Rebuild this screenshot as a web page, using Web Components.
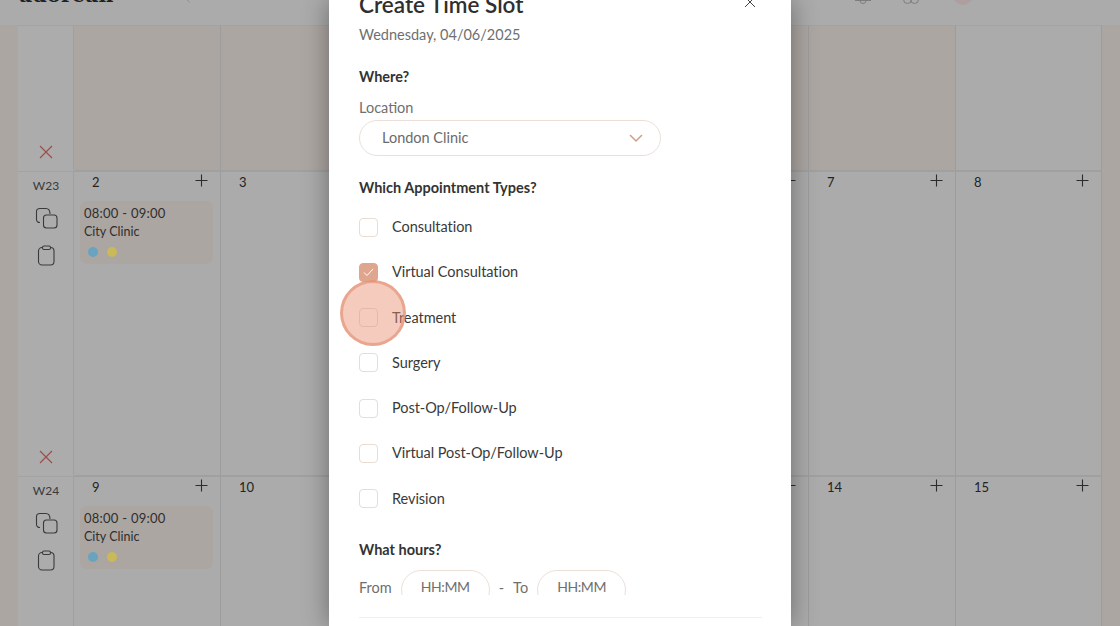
<!DOCTYPE html>
<html>
<head>
<meta charset="utf-8">
<style>
html, body { margin: 0; padding: 0; height: 100%; overflow: hidden; background: #ababab; font-family: Lato, "Liberation Sans", sans-serif; }
</style>
</head>
<body>
<template id="dayTemplate">
    <style>
        :host { display: block; position: relative; box-sizing: border-box; border-right: 1px solid #9c9c9c; border-top: 2px solid #a0a0a0; padding: 1px 6px 0 6px; color: #232323; }
        :host([beige]) { background: #aca6a2; }
        :host([top]) { border-top: 1px solid #a3a3a3; }
        .head { display: flex; justify-content: space-between; align-items: center; height: 17px; padding: 0 7px 0 12px; font-size: 13px; }
        svg { display: block; width: 13px; height: 13px; margin-right: -1px; margin-top: -2px; }
        .cards { display: block; margin-top: 11px; }
    </style>
    <div class="head"><span class="num"></span><svg viewBox="0 0 13 13" class="plus"><path d="M6.5 .5v12M.5 6.5h12" stroke="#2c2c2c" stroke-width="1.1" fill="none"/></svg></div>
    <div class="cards"><slot></slot></div>
</template>

<template id="slotTemplate">
    <style>
        :host { display: block; box-sizing: border-box; width: 133px; height: 63px; background: #aca6a2; border-radius: 7px; padding: 3px 4px; font-size: 13px; line-height: 18.5px; color: #2e2e2e; }
        .time { letter-spacing: .25px; }
        .place { font-size: 12.5px; }
        .dots { display: flex; gap: 8.5px; padding: 6px 4px 0 4px; }
        .dots i { display: block; width: 10px; height: 10px; border-radius: 50%; }
    </style>
    <div class="time"><slot name="time"></slot></div>
    <div class="place"><slot name="place"></slot></div>
    <div class="dots"><i style="background:#68a3c0"></i><i style="background:#c9b958"></i></div>
</template>

<template id="weekTemplate">
    <style>
        :host { display: flex; flex-direction: column; align-items: center; box-sizing: border-box; border-top: 1px solid #a3a3a3; border-right: 1px solid #a0a0a0; background: #acacac; position: relative; color: #3a3a3a; font-size: 12px; }
        :host(:not([empty])) { margin-top: 1px; }
        .label { margin-top: 5px; line-height: 18px; padding-left: 1px; }
        svg { display: block; fill: none; stroke: #3a3a3a; stroke-width: 1.1; }
        .copy { margin-top: 12px; margin-left: 2px; }
        .clip { margin-top: 16px; }
        .cross { margin-top: auto; margin-bottom: 11px; }
    </style>
    <div class="label"><slot></slot></div>
    <svg class="copy" width="23" height="22" viewBox="0 0 23 22"><rect x="8.5" y="8" width="13.5" height="13" rx="3"/><path d="M5 15.500 C3 15.500 1.500 14.500 1.500 12.500 V4.500 C1.500 2.500 3 1.500 5 1.500 H11 C13.500 1.500 15 3.500 15 7"/></svg>
    <svg class="clip" width="18" height="21" viewBox="0 0 18 21"><rect x="1.500" y="2.500" width="15.500" height="17.500" rx="3.500"/><rect x="5.500" y="1" width="8" height="3.500" rx="1.500" fill="#acacac"/></svg>
    <svg class="cross" width="14" height="14" viewBox="0 0 14 14"><path d="M1 1l12 12M13 1L1 13" stroke="#9c4f4a" stroke-width="1.200"/></svg>
</template>

<template id="calTemplate">
    <style>
        :host { display: block; height: 100%; position: relative; overflow: hidden; background: #ababab; }
        .top { height: 25px; box-sizing: border-box; position: relative; display: flex; align-items: flex-end; overflow: hidden; }
        .logo { font-family: "DejaVu Serif", "Liberation Serif", serif; font-weight: 700; font-size: 20.5px; line-height: 22px; color: #222; margin: 0 0 19px 19px; letter-spacing: .2px; }
        .mark { margin: 0 0 22px 72px; }
        .tools { margin-left: auto; margin-right: 147px; display: flex; align-items: flex-end; }
        .tools svg { display: block; fill: none; stroke: #7d7d7d; stroke-width: 1; }
        .avatar { width: 20px; height: 20px; border-radius: 50%; background: #ad9f9f; margin: 0 0 20px 34px; }
        .grid { display: grid; grid-template-columns: 18px 56px repeat(6, 147px) 146px 1fr; grid-template-rows: 145px 305px 200px; }
        .edge { background: #aca6a2; grid-row: 1 / span 3; }
        .edge.last { grid-column: 10; }
        week-col { grid-column: 2; }
    </style>
    <div class="top">
        <span class="logo">adorean</span>
        <svg class="mark" width="6" height="3" viewBox="0 0 6 3"><path d="M1 0l3 2.500" stroke="#b08a80" fill="none"/></svg>
        <div class="tools">
            <svg style="margin-bottom:21px" width="16" height="4" viewBox="0 0 16 4"><path d="M0 .5h16M5 .5a3 3 0 0 0 6 0"/></svg>
            <svg style="margin:0 0 21px 32px" width="16" height="4" viewBox="0 0 16 4"><circle cx="4.500" cy="-.5" r="4"/><circle cx="11.500" cy="-.5" r="4"/></svg>
            <div class="avatar"></div>
        </div>
    </div>
    <div class="grid">
        <div class="edge"></div>
        <week-col empty style="grid-row:1"></week-col>
        <day-cell top beige style="grid-row:1"></day-cell>
        <day-cell top beige style="grid-row:1"></day-cell>
        <day-cell top beige style="grid-row:1"></day-cell>
        <day-cell top beige style="grid-row:1"></day-cell>
        <day-cell top beige style="grid-row:1"></day-cell>
        <day-cell top beige style="grid-row:1"></day-cell>
        <day-cell top style="grid-row:1"></day-cell>
        <div class="edge last"></div>

        <week-col>W23</week-col>
        <day-cell num="2"><time-slot><span slot="time">08:00 - 09:00</span><span slot="place">City Clinic</span></time-slot></day-cell>
        <day-cell num="3" noplus></day-cell>
        <day-cell num="4"></day-cell>
        <day-cell num="5"></day-cell>
        <day-cell num="6"></day-cell>
        <day-cell num="7"></day-cell>
        <day-cell num="8"></day-cell>

        <week-col>W24</week-col>
        <day-cell num="9"><time-slot><span slot="time">08:00 - 09:00</span><span slot="place">City Clinic</span></time-slot></day-cell>
        <day-cell num="10" noplus></day-cell>
        <day-cell num="11"></day-cell>
        <day-cell num="12"></day-cell>
        <day-cell num="13"></day-cell>
        <day-cell num="14"></day-cell>
        <day-cell num="15"></day-cell>
    </div>
</template>

<template id="checkTemplate">
    <style>
        :host { display: flex; align-items: center; gap: 14px; height: 45.25px; font-size: 14.5px; letter-spacing: -.05px; color: #3a3a3a; }
        .box { box-sizing: border-box; width: 19px; height: 19px; margin-top: 1px; border: 1px solid #e8dcd5; border-radius: 4px; background: #fff; display: flex; align-items: center; justify-content: center; }
        :host([checked]) .box { background: #dfa68f; border-color: #dfa68f; }
        svg { display: none; }
        :host([checked]) svg { display: block; }
    </style>
    <div class="box"><svg width="11" height="9" viewBox="0 0 11 9"><path d="M1 4.500l3 3L10 1" stroke="#fff" fill="none" stroke-width="1"/></svg></div>
    <div><slot></slot></div>
</template>

<template id="modalTemplate">
    <style>
        :host { display: block; position: absolute; top: 0; bottom: 0; left: 329px; width: 462px; background: #fff; box-shadow: 0 0 24px rgba(0,0,0,.38); overflow: hidden; box-sizing: border-box; padding: 0 30px; color: #2f2f2f; font-size: 14.5px; }
        .title { display: flex; justify-content: space-between; align-items: flex-start; margin-top: -8.5px; font-size: 22.5px; font-weight: 600; line-height: 25px; }
        .title svg { display: block; margin: 4.5px 5.5px 0 0; }
        .date { color: #6f6f6f; margin-top: 8.5px; line-height: 20px; }
        h3 { font-size: 14.5px; font-weight: 700; line-height: 20px; margin: 0; color: #333; }
        .where { margin-top: 22px; }
        .label { color: #6f6f6f; line-height: 20px; margin-top: 11px; }
        .select { box-sizing: border-box; display: flex; align-items: center; justify-content: space-between; width: 302px; height: 36px; border: 1px solid #ecdfd8; border-radius: 18px; margin-top: 2px; padding: 0 17px 0 22px; color: #6a6a6a; }
        .select span { margin-top: -2px; }
        .types { margin-top: 22px; }
        .list { display: block; margin-top: 6px; }
        .hours { margin-top: 19px; }
        .row { display: flex; align-items: flex-start; margin-top: 10px; height: 25px; overflow: hidden; color: #6f6f6f; }
        .row span { line-height: 36px; }
        .pill { box-sizing: border-box; width: 89px; height: 40px; border: 1px solid #ecdfd8; border-radius: 20px; text-align: center; line-height: 32px; font-size: 14px; letter-spacing: -.4px; }
        .rule { height: 1px; background: #efefef; margin-top: 22px; width: 403px; }
    </style>
    <div class="title"><span>Create Time Slot</span><svg width="12" height="12" viewBox="0 0 12 12"><path d="M1 1l10 10M11 1L1 11" stroke="#444" fill="none"/></svg></div>
    <div class="date">Wednesday, 04/06/2025</div>
    <h3 class="where">Where?</h3>
    <div class="label">Location</div>
    <div class="select"><span>London Clinic</span><svg width="14" height="9" viewBox="0 0 14 9"><path d="M1 1l6 6 6-6" stroke="#cf9f8c" stroke-width="1.500" fill="none"/></svg></div>
    <h3 class="types">Which Appointment Types?</h3>
    <div class="list"><slot></slot></div>
    <h3 class="hours">What hours?</h3>
    <div class="row">
        <span style="margin-right:9px">From</span><div class="pill">HH:MM</div>
        <span style="margin:0 9px 0 9px">-</span><span style="margin-right:9px">To</span><div class="pill">HH:MM</div>
    </div>
    <div class="rule"></div>
</template>

<script>
class DayCell extends HTMLElement {
    constructor() {
        super();
        this.attachShadow({mode: "open"});
        this.shadowRoot.appendChild(document.getElementById("dayTemplate").content.cloneNode(true));
    }
    connectedCallback() {
        this.shadowRoot.querySelector(".num").textContent = this.getAttribute("num") || "";
        if(!this.hasAttribute("num") || this.hasAttribute("noplus")) {
            this.shadowRoot.querySelector(".plus").style.display = "none";
        }
    }
}
class TimeSlot extends HTMLElement {
    constructor() {
        super();
        this.attachShadow({mode: "open"});
        this.shadowRoot.appendChild(document.getElementById("slotTemplate").content.cloneNode(true));
    }
}
class WeekCol extends HTMLElement {
    constructor() {
        super();
        this.attachShadow({mode: "open"});
        this.shadowRoot.appendChild(document.getElementById("weekTemplate").content.cloneNode(true));
    }
    connectedCallback() {
        if(this.hasAttribute("empty")) {
            this.shadowRoot.querySelector(".copy").style.display = "none";
            this.shadowRoot.querySelector(".clip").style.display = "none";
        }
    }
}
class CalendarView extends HTMLElement {
    constructor() {
        super();
        this.attachShadow({mode: "open"});
        this.shadowRoot.appendChild(document.getElementById("calTemplate").content.cloneNode(true));
    }
}
class TypeCheck extends HTMLElement {
    constructor() {
        super();
        this.attachShadow({mode: "open"});
        this.shadowRoot.appendChild(document.getElementById("checkTemplate").content.cloneNode(true));
    }
}
class SlotModal extends HTMLElement {
    constructor() {
        super();
        this.attachShadow({mode: "open"});
        this.shadowRoot.appendChild(document.getElementById("modalTemplate").content.cloneNode(true));
    }
}
class ClickMark extends HTMLElement {
    constructor() {
        super();
        this.attachShadow({mode: "open"});
        this.shadowRoot.innerHTML = `
        <style>
            :host { display: block; position: absolute; left: 340px; top: 280px; width: 66px; height: 66px; box-sizing: border-box; border-radius: 50%; border: 3px solid rgba(228,150,120,.7); background: rgba(232,140,110,.45); }
        </style>`;
    }
}
customElements.define("day-cell", DayCell);
customElements.define("time-slot", TimeSlot);
customElements.define("week-col", WeekCol);
customElements.define("calendar-view", CalendarView);
customElements.define("type-check", TypeCheck);
customElements.define("slot-modal", SlotModal);
customElements.define("click-mark", ClickMark);
</script>
<calendar-view></calendar-view>
<slot-modal>
    <type-check>Consultation</type-check>
    <type-check checked>Virtual Consultation</type-check>
    <type-check>Treatment</type-check>
    <type-check>Surgery</type-check>
    <type-check>Post-Op/Follow-Up</type-check>
    <type-check>Virtual Post-Op/Follow-Up</type-check>
    <type-check>Revision</type-check>
</slot-modal>
<click-mark></click-mark>
</body>
</html>
